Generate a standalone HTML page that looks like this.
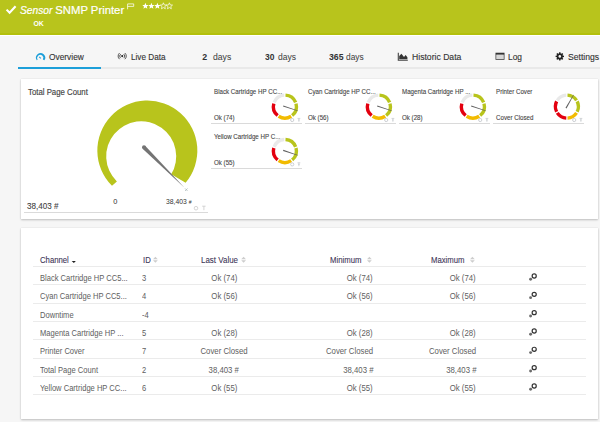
<!DOCTYPE html>
<html><head><meta charset="utf-8">
<style>
*{margin:0;padding:0;box-sizing:border-box}
html,body{width:600px;height:422px;overflow:hidden;background:#f6f6f6;font-family:"Liberation Sans",sans-serif;position:relative}
.a{position:absolute;white-space:nowrap;line-height:1}
.card{position:absolute;background:#fff;box-shadow:0 1px 2px rgba(0,0,0,.22),0 0 1px rgba(0,0,0,.12)}
.rl{position:absolute;left:33px;width:553px;height:1px;background:#ebebeb}
.pl{position:absolute;height:1px;background:#dadada}
</style></head><body>
<div class="a" style="left:0;top:0;width:600px;height:33px;background:#b8c41c"></div>
<div class="a" style="left:0;top:33px;width:600px;height:1.5px;background:#b3c00c"></div>
<div class="a" style="left:0;top:34.5px;width:600px;height:1.5px;background:#fff"></div>
<div class="a" style="left:20.00px;top:4.89px;font-size:11px;color:#fff;font-weight:400;font-style:italic;-webkit-text-stroke:0.2px #fff;"><span style="display:inline-block;transform:scaleX(0.93);transform-origin:left">Sensor</span></div>
<div class="a" style="left:55.30px;top:4.63px;font-size:11.3px;color:#fff;font-weight:400;font-style:normal;-webkit-text-stroke:0.2px #fff;">SNMP Printer</div>
<div class="a" style="left:33.50px;top:20.86px;font-size:6.9px;color:#fff;font-weight:700;font-style:normal;">OK</div>
<div class="a" style="left:48.50px;top:52.55px;font-size:8.8px;color:#333;font-weight:400;font-style:normal;-webkit-text-stroke:0.12px #333;"><span style="display:inline-block;transform:scaleX(0.95);transform-origin:left">Overview</span></div>
<div class="a" style="left:130.50px;top:52.55px;font-size:8.8px;color:#333;font-weight:400;font-style:normal;-webkit-text-stroke:0.12px #333;"><span style="display:inline-block;transform:scaleX(0.93);transform-origin:left">Live Data</span></div>
<div class="a" style="left:202.30px;top:52.55px;font-size:8.8px;color:#333;font-weight:700;font-style:normal;">2</div>
<div class="a" style="left:264.50px;top:52.55px;font-size:8.8px;color:#333;font-weight:700;font-style:normal;"><span style="display:inline-block;transform:scaleX(0.96);transform-origin:left">30</span></div>
<div class="a" style="left:328.50px;top:52.55px;font-size:8.8px;color:#333;font-weight:700;font-style:normal;"><span style="display:inline-block;transform:scaleX(0.99);transform-origin:left">365</span></div>
<div class="a" style="left:212.60px;top:52.55px;font-size:8.8px;color:#444;font-weight:400;font-style:normal;-webkit-text-stroke:0.05px #444;"><span style="display:inline-block;transform:scaleX(0.98);transform-origin:left">days</span></div>
<div class="a" style="left:277.80px;top:52.55px;font-size:8.8px;color:#444;font-weight:400;font-style:normal;-webkit-text-stroke:0.05px #444;"><span style="display:inline-block;transform:scaleX(0.97);transform-origin:left">days</span></div>
<div class="a" style="left:346.00px;top:52.55px;font-size:8.8px;color:#444;font-weight:400;font-style:normal;-webkit-text-stroke:0.05px #444;"><span style="display:inline-block;transform:scaleX(0.95);transform-origin:left">days</span></div>
<div class="a" style="left:411.50px;top:52.55px;font-size:8.8px;color:#333;font-weight:400;font-style:normal;-webkit-text-stroke:0.12px #333;"><span style="display:inline-block;transform:scaleX(0.98);transform-origin:left">Historic Data</span></div>
<div class="a" style="left:508.00px;top:52.55px;font-size:8.8px;color:#333;font-weight:400;font-style:normal;-webkit-text-stroke:0.12px #333;"><span style="display:inline-block;transform:scaleX(0.95);transform-origin:left">Log</span></div>
<div class="a" style="left:567.50px;top:52.55px;font-size:8.8px;color:#333;font-weight:400;font-style:normal;-webkit-text-stroke:0.12px #333;"><span style="display:inline-block;transform:scaleX(0.98);transform-origin:left">Settings</span></div>
<div class="a" style="left:18px;top:67px;width:582px;height:2px;background:#e9e9e9"></div>
<div class="a" style="left:18px;top:67px;width:83px;height:2px;background:#1d9fd9"></div>
<div class="card" style="left:21px;top:79px;width:577px;height:140px"></div>
<div class="card" style="left:21px;top:228px;width:577px;height:191px"></div>
<svg class="a" style="left:0;top:0" width="600" height="422" viewBox="0 0 600 422"><polyline points="6.6,9.6 9.6,12.8 15.6,6.2" fill="none" stroke="#fff" stroke-width="2.1"/><path d="M127.6,9.3V3.9H133.7V6.4H127.6" fill="none" stroke="#fff" stroke-width="0.75"/><polygon points="145.40,2.80 146.27,4.90 148.54,5.08 146.81,6.56 147.34,8.77 145.40,7.58 143.46,8.77 143.99,6.56 142.26,5.08 144.53,4.90" fill="#fff"/><polygon points="151.40,2.80 152.27,4.90 154.54,5.08 152.81,6.56 153.34,8.77 151.40,7.58 149.46,8.77 149.99,6.56 148.26,5.08 150.53,4.90" fill="#fff"/><polygon points="157.40,2.80 158.27,4.90 160.54,5.08 158.81,6.56 159.34,8.77 157.40,7.58 155.46,8.77 155.99,6.56 154.26,5.08 156.53,4.90" fill="#fff"/><polygon points="163.40,2.80 164.27,4.90 166.54,5.08 164.81,6.56 165.34,8.77 163.40,7.58 161.46,8.77 161.99,6.56 160.26,5.08 162.53,4.90" fill="none" stroke="#fff" stroke-width="0.7"/><polygon points="169.40,2.80 170.27,4.90 172.54,5.08 170.81,6.56 171.34,8.77 169.40,7.58 167.46,8.77 167.99,6.56 166.26,5.08 168.53,4.90" fill="none" stroke="#fff" stroke-width="0.7"/><path d="M36.83,60.34A4.6,4.6 0 1 1 44.37,60.34L42.86,59.60A3.1,3.1 0 1 0 37.60,59.69Z" fill="#1d9fd9"/><path d="M39.2,56.8L40.9,58.3" stroke="#1d9fd9" stroke-width="1.1"/><circle cx="122.2" cy="56.1" r="1.05" fill="#222"/><path d="M120.8,54.1A2.4,2.4 0 0 0 120.8,58.1M123.6,54.1A2.4,2.4 0 0 1 123.6,58.1M119.6,53.0A4,4 0 0 0 119.6,59.2M124.8,53.0A4,4 0 0 1 124.8,59.2" fill="none" stroke="#444" stroke-width="0.9"/><path d="M398.3,52.8V60.3H407.8" fill="none" stroke="#444" stroke-width="1.1"/><path d="M399.2,59.2V56L401.4,53.8L404,57L405.6,55L407.4,57.2V59.2Z" fill="#333"/><rect x="495.9" y="53.1" width="8.2" height="6.4" fill="#e6e6e6" stroke="#444" stroke-width="0.8"/><rect x="495.9" y="53" width="8.2" height="1.6" fill="#333"/><path d="M498,55v4M500,55v4M502,55v4" stroke="#aaa" stroke-width="0.5"/><polygon points="559.14,52.20 560.46,52.20 560.71,53.44 561.26,53.66 562.30,52.96 563.24,53.90 562.54,54.94 562.76,55.49 564.00,55.74 564.00,57.06 562.76,57.31 562.54,57.86 563.24,58.90 562.30,59.84 561.26,59.14 560.71,59.36 560.46,60.60 559.14,60.60 558.89,59.36 558.34,59.14 557.30,59.84 556.36,58.90 557.06,57.86 556.84,57.31 555.60,57.06 555.60,55.74 556.84,55.49 557.06,54.94 556.36,53.90 557.30,52.96 558.34,53.66 558.89,53.44" fill="#222"/><circle cx="559.8" cy="56.4" r="1.3" fill="#f6f6f6"/></svg>
<div class="a" style="left:27.70px;top:87.97px;font-size:8.3px;color:#444;font-weight:400;font-style:normal;-webkit-text-stroke:0.15px #444;"><span style="display:inline-block;transform:scaleX(0.94);transform-origin:left">Total Page Count</span></div>
<div class="a" style="left:27.00px;top:201.95px;font-size:8.8px;color:#444;font-weight:400;font-style:normal;-webkit-text-stroke:0.1px #444;"><span style="display:inline-block;transform:scaleX(0.92);transform-origin:left">38,403 #</span></div>
<div class="pl" style="left:24px;top:212px;width:184px"></div>
<div class="a" style="left:113.20px;top:198.24px;font-size:7.4px;color:#333;font-weight:400;font-style:normal;">0</div>
<div class="a" style="left:165.60px;top:198.24px;font-size:7.4px;color:#333;font-weight:400;font-style:normal;"><span style="display:inline-block;transform:scaleX(0.92);transform-origin:left">38,403 <span style="font-size:5.5px">#</span></span></div>
<div class="a" style="left:214.00px;top:88.84px;font-size:6.8px;color:#444;font-weight:400;font-style:normal;-webkit-text-stroke:0.1px #444;"><span style="display:inline-block;transform:scaleX(0.91);transform-origin:left">Black Cartridge HP CC...</span></div>
<div class="a" style="left:214.00px;top:115.04px;font-size:6.8px;color:#444;font-weight:400;font-style:normal;-webkit-text-stroke:0.1px #444;"><span style="display:inline-block;transform:scaleX(0.91);transform-origin:left">Ok (74)</span></div>
<div class="pl" style="left:210.80px;top:122.70px;width:91px"></div>
<div class="a" style="left:308.00px;top:88.84px;font-size:6.8px;color:#444;font-weight:400;font-style:normal;-webkit-text-stroke:0.1px #444;"><span style="display:inline-block;transform:scaleX(0.91);transform-origin:left">Cyan Cartridge HP CC...</span></div>
<div class="a" style="left:308.00px;top:115.04px;font-size:6.8px;color:#444;font-weight:400;font-style:normal;-webkit-text-stroke:0.1px #444;"><span style="display:inline-block;transform:scaleX(0.91);transform-origin:left">Ok (56)</span></div>
<div class="pl" style="left:304.80px;top:122.70px;width:91px"></div>
<div class="a" style="left:402.00px;top:88.84px;font-size:6.8px;color:#444;font-weight:400;font-style:normal;-webkit-text-stroke:0.1px #444;"><span style="display:inline-block;transform:scaleX(0.91);transform-origin:left">Magenta Cartridge HP ...</span></div>
<div class="a" style="left:402.00px;top:115.04px;font-size:6.8px;color:#444;font-weight:400;font-style:normal;-webkit-text-stroke:0.1px #444;"><span style="display:inline-block;transform:scaleX(0.91);transform-origin:left">Ok (28)</span></div>
<div class="pl" style="left:398.80px;top:122.70px;width:91px"></div>
<div class="a" style="left:496.00px;top:88.84px;font-size:6.8px;color:#444;font-weight:400;font-style:normal;-webkit-text-stroke:0.1px #444;"><span style="display:inline-block;transform:scaleX(0.91);transform-origin:left">Printer Cover</span></div>
<div class="a" style="left:496.00px;top:115.04px;font-size:6.8px;color:#444;font-weight:400;font-style:normal;-webkit-text-stroke:0.1px #444;"><span style="display:inline-block;transform:scaleX(0.91);transform-origin:left">Cover Closed</span></div>
<div class="pl" style="left:492.80px;top:122.70px;width:91px"></div>
<div class="a" style="left:214.00px;top:133.84px;font-size:6.8px;color:#444;font-weight:400;font-style:normal;-webkit-text-stroke:0.1px #444;"><span style="display:inline-block;transform:scaleX(0.91);transform-origin:left">Yellow Cartridge HP C...</span></div>
<div class="a" style="left:214.00px;top:160.04px;font-size:6.8px;color:#444;font-weight:400;font-style:normal;-webkit-text-stroke:0.1px #444;"><span style="display:inline-block;transform:scaleX(0.91);transform-origin:left">Ok (55)</span></div>
<div class="pl" style="left:210.80px;top:167.70px;width:91px"></div>
<div class="a" style="left:39.50px;top:255.75px;font-size:8.8px;color:#3c3456;font-weight:400;font-style:normal;-webkit-text-stroke:0.1px #3c3456;"><span style="display:inline-block;transform:scaleX(0.88);transform-origin:left">Channel</span></div>
<div class="a" style="left:142.60px;top:255.75px;font-size:8.8px;color:#3c3456;font-weight:400;font-style:normal;-webkit-text-stroke:0.1px #3c3456;"><span style="display:inline-block;transform:scaleX(0.88);transform-origin:left">ID</span></div>
<div class="a" style="left:201.20px;top:255.75px;font-size:8.8px;color:#3c3456;font-weight:400;font-style:normal;-webkit-text-stroke:0.08px #3c3456;"><span style="display:inline-block;transform:scaleX(0.905);transform-origin:left">Last Value</span></div>
<div class="a" style="left:329.80px;top:255.75px;font-size:8.8px;color:#3c3456;font-weight:400;font-style:normal;-webkit-text-stroke:0.1px #3c3456;"><span style="display:inline-block;transform:scaleX(0.88);transform-origin:left">Minimum</span></div>
<div class="a" style="left:431.00px;top:255.75px;font-size:8.8px;color:#3c3456;font-weight:400;font-style:normal;-webkit-text-stroke:0.1px #3c3456;"><span style="display:inline-block;transform:scaleX(0.88);transform-origin:left">Maximum</span></div>
<div class="rl" style="top:266px"></div>
<div class="a" style="left:39.50px;top:273.92px;font-size:8.6px;color:#5e5e5e;font-weight:400;font-style:normal;"><span style="display:inline-block;transform:scaleX(0.88);transform-origin:left">Black Cartridge HP CC5...</span></div>
<div class="a" style="left:142.40px;top:273.92px;font-size:8.6px;color:#5e5e5e;font-weight:400;font-style:normal;"><span style="display:inline-block;transform:scaleX(0.88);transform-origin:left">3</span></div>
<div class="a" style="left:74.20px;width:300px;text-align:center;top:273.92px;font-size:8.6px;color:#5e5e5e;font-weight:400;font-style:normal;"><span style="display:inline-block;transform:scaleX(0.905);transform-origin:center">Ok (74)</span></div>
<div class="a" style="right:227.00px;top:273.92px;font-size:8.6px;color:#5e5e5e;font-weight:400;font-style:normal;"><span style="display:inline-block;transform:scaleX(0.905);transform-origin:right">Ok (74)</span></div>
<div class="a" style="right:124.00px;top:273.92px;font-size:8.6px;color:#5e5e5e;font-weight:400;font-style:normal;"><span style="display:inline-block;transform:scaleX(0.905);transform-origin:right">Ok (74)</span></div>
<div class="rl" style="top:284.20px"></div>
<div class="a" style="left:39.50px;top:292.25px;font-size:8.6px;color:#5e5e5e;font-weight:400;font-style:normal;"><span style="display:inline-block;transform:scaleX(0.88);transform-origin:left">Cyan Cartridge HP CC5...</span></div>
<div class="a" style="left:142.40px;top:292.25px;font-size:8.6px;color:#5e5e5e;font-weight:400;font-style:normal;"><span style="display:inline-block;transform:scaleX(0.88);transform-origin:left">4</span></div>
<div class="a" style="left:74.20px;width:300px;text-align:center;top:292.25px;font-size:8.6px;color:#5e5e5e;font-weight:400;font-style:normal;"><span style="display:inline-block;transform:scaleX(0.905);transform-origin:center">Ok (56)</span></div>
<div class="a" style="right:227.00px;top:292.25px;font-size:8.6px;color:#5e5e5e;font-weight:400;font-style:normal;"><span style="display:inline-block;transform:scaleX(0.905);transform-origin:right">Ok (56)</span></div>
<div class="a" style="right:124.00px;top:292.25px;font-size:8.6px;color:#5e5e5e;font-weight:400;font-style:normal;"><span style="display:inline-block;transform:scaleX(0.905);transform-origin:right">Ok (56)</span></div>
<div class="rl" style="top:302.53px"></div>
<div class="a" style="left:39.50px;top:310.58px;font-size:8.6px;color:#5e5e5e;font-weight:400;font-style:normal;"><span style="display:inline-block;transform:scaleX(0.88);transform-origin:left">Downtime</span></div>
<div class="a" style="left:142.40px;top:310.58px;font-size:8.6px;color:#5e5e5e;font-weight:400;font-style:normal;"><span style="display:inline-block;transform:scaleX(0.88);transform-origin:left">-4</span></div>
<div class="rl" style="top:320.86px"></div>
<div class="a" style="left:39.50px;top:328.91px;font-size:8.6px;color:#5e5e5e;font-weight:400;font-style:normal;"><span style="display:inline-block;transform:scaleX(0.88);transform-origin:left">Magenta Cartridge HP ...</span></div>
<div class="a" style="left:142.40px;top:328.91px;font-size:8.6px;color:#5e5e5e;font-weight:400;font-style:normal;"><span style="display:inline-block;transform:scaleX(0.88);transform-origin:left">5</span></div>
<div class="a" style="left:74.20px;width:300px;text-align:center;top:328.91px;font-size:8.6px;color:#5e5e5e;font-weight:400;font-style:normal;"><span style="display:inline-block;transform:scaleX(0.905);transform-origin:center">Ok (28)</span></div>
<div class="a" style="right:227.00px;top:328.91px;font-size:8.6px;color:#5e5e5e;font-weight:400;font-style:normal;"><span style="display:inline-block;transform:scaleX(0.905);transform-origin:right">Ok (28)</span></div>
<div class="a" style="right:124.00px;top:328.91px;font-size:8.6px;color:#5e5e5e;font-weight:400;font-style:normal;"><span style="display:inline-block;transform:scaleX(0.905);transform-origin:right">Ok (28)</span></div>
<div class="rl" style="top:339.19px"></div>
<div class="a" style="left:39.50px;top:347.24px;font-size:8.6px;color:#5e5e5e;font-weight:400;font-style:normal;"><span style="display:inline-block;transform:scaleX(0.88);transform-origin:left">Printer Cover</span></div>
<div class="a" style="left:142.40px;top:347.24px;font-size:8.6px;color:#5e5e5e;font-weight:400;font-style:normal;"><span style="display:inline-block;transform:scaleX(0.88);transform-origin:left">7</span></div>
<div class="a" style="left:74.20px;width:300px;text-align:center;top:347.24px;font-size:8.6px;color:#5e5e5e;font-weight:400;font-style:normal;"><span style="display:inline-block;transform:scaleX(0.905);transform-origin:center">Cover Closed</span></div>
<div class="a" style="right:227.00px;top:347.24px;font-size:8.6px;color:#5e5e5e;font-weight:400;font-style:normal;"><span style="display:inline-block;transform:scaleX(0.905);transform-origin:right">Cover Closed</span></div>
<div class="a" style="right:124.00px;top:347.24px;font-size:8.6px;color:#5e5e5e;font-weight:400;font-style:normal;"><span style="display:inline-block;transform:scaleX(0.905);transform-origin:right">Cover Closed</span></div>
<div class="rl" style="top:357.52px"></div>
<div class="a" style="left:39.50px;top:365.57px;font-size:8.6px;color:#5e5e5e;font-weight:400;font-style:normal;"><span style="display:inline-block;transform:scaleX(0.88);transform-origin:left">Total Page Count</span></div>
<div class="a" style="left:142.40px;top:365.57px;font-size:8.6px;color:#5e5e5e;font-weight:400;font-style:normal;"><span style="display:inline-block;transform:scaleX(0.88);transform-origin:left">2</span></div>
<div class="a" style="left:74.20px;width:300px;text-align:center;top:365.57px;font-size:8.6px;color:#5e5e5e;font-weight:400;font-style:normal;"><span style="display:inline-block;transform:scaleX(0.905);transform-origin:center">38,403 #</span></div>
<div class="a" style="right:227.00px;top:365.57px;font-size:8.6px;color:#5e5e5e;font-weight:400;font-style:normal;"><span style="display:inline-block;transform:scaleX(0.905);transform-origin:right">38,403 #</span></div>
<div class="a" style="right:124.00px;top:365.57px;font-size:8.6px;color:#5e5e5e;font-weight:400;font-style:normal;"><span style="display:inline-block;transform:scaleX(0.905);transform-origin:right">38,403 #</span></div>
<div class="rl" style="top:375.85px"></div>
<div class="a" style="left:39.50px;top:383.90px;font-size:8.6px;color:#5e5e5e;font-weight:400;font-style:normal;"><span style="display:inline-block;transform:scaleX(0.88);transform-origin:left">Yellow Cartridge HP CC...</span></div>
<div class="a" style="left:142.40px;top:383.90px;font-size:8.6px;color:#5e5e5e;font-weight:400;font-style:normal;"><span style="display:inline-block;transform:scaleX(0.88);transform-origin:left">6</span></div>
<div class="a" style="left:74.20px;width:300px;text-align:center;top:383.90px;font-size:8.6px;color:#5e5e5e;font-weight:400;font-style:normal;"><span style="display:inline-block;transform:scaleX(0.905);transform-origin:center">Ok (55)</span></div>
<div class="a" style="right:227.00px;top:383.90px;font-size:8.6px;color:#5e5e5e;font-weight:400;font-style:normal;"><span style="display:inline-block;transform:scaleX(0.905);transform-origin:right">Ok (55)</span></div>
<div class="a" style="right:124.00px;top:383.90px;font-size:8.6px;color:#5e5e5e;font-weight:400;font-style:normal;"><span style="display:inline-block;transform:scaleX(0.905);transform-origin:right">Ok (55)</span></div>
<div class="rl" style="top:394.18px"></div>
<svg class="a" style="left:0;top:0" width="600" height="422" viewBox="0 0 600 422"><path d="M111.99,185.86A50,50 0 1 1 185.65,182.64L171.20,174.33A35,35 0 1 0 116.89,181.48Z" fill="#b8c41c"/><polygon points="142.59,148.71 145.41,145.89 184.5,187.8" fill="#747474"/><circle cx="144" cy="147.3" r="2.0" fill="#747474"/><path d="M185,188.4l2.6,2.6M187.6,188.4l-2.6,2.6" stroke="#9aa" stroke-width="0.6"/><circle cx="196" cy="208.2" r="1.8" fill="none" stroke="#cfcfcf" stroke-width="0.9"/><path d="M202.2,206.2h3.4M203.9,206.2v4" stroke="#cfcfcf" stroke-width="0.9" fill="none"/><path d="M274.16,102.48A11.5,11.5 0 0 1 284.30,95.12" stroke="#e9e9e9" stroke-width="3.4" fill="none"/><path d="M285.50,95.12A11.5,11.5 0 0 1 295.64,102.48" stroke="#b8c41c" stroke-width="3.4" fill="none"/><path d="M296.01,103.62A11.5,11.5 0 0 1 292.14,115.54" stroke="#b8c41c" stroke-width="3.4" fill="none"/><path d="M291.16,116.24A11.5,11.5 0 0 1 278.64,116.24" stroke="#f2bb00" stroke-width="3.4" fill="none"/><path d="M277.66,115.54A11.5,11.5 0 0 1 273.79,103.62" stroke="#e3000f" stroke-width="3.4" fill="none"/><polygon points="283.00,106.61 283.37,105.47 297.72,110.50 297.57,110.98" fill="#606060"/><circle cx="292.20" cy="120.00" r="1.6" fill="none" stroke="#c4c8cc" stroke-width="0.85"/><path d="M297.50,118.40h2.8M298.10,120.00h1.6M298.90,118.40v3.4" stroke="#c4c8cc" stroke-width="0.75" fill="none"/><path d="M368.16,102.48A11.5,11.5 0 0 1 378.30,95.12" stroke="#e9e9e9" stroke-width="3.4" fill="none"/><path d="M379.50,95.12A11.5,11.5 0 0 1 389.64,102.48" stroke="#b8c41c" stroke-width="3.4" fill="none"/><path d="M390.01,103.62A11.5,11.5 0 0 1 386.14,115.54" stroke="#b8c41c" stroke-width="3.4" fill="none"/><path d="M385.16,116.24A11.5,11.5 0 0 1 372.64,116.24" stroke="#f2bb00" stroke-width="3.4" fill="none"/><path d="M371.66,115.54A11.5,11.5 0 0 1 367.79,103.62" stroke="#e3000f" stroke-width="3.4" fill="none"/><polygon points="377.00,106.61 377.37,105.47 391.72,110.50 391.57,110.98" fill="#606060"/><circle cx="386.20" cy="120.00" r="1.6" fill="none" stroke="#c4c8cc" stroke-width="0.85"/><path d="M391.50,118.40h2.8M392.10,120.00h1.6M392.90,118.40v3.4" stroke="#c4c8cc" stroke-width="0.75" fill="none"/><path d="M462.16,102.48A11.5,11.5 0 0 1 472.30,95.12" stroke="#e9e9e9" stroke-width="3.4" fill="none"/><path d="M473.50,95.12A11.5,11.5 0 0 1 483.64,102.48" stroke="#b8c41c" stroke-width="3.4" fill="none"/><path d="M484.01,103.62A11.5,11.5 0 0 1 480.14,115.54" stroke="#b8c41c" stroke-width="3.4" fill="none"/><path d="M479.16,116.24A11.5,11.5 0 0 1 466.64,116.24" stroke="#f2bb00" stroke-width="3.4" fill="none"/><path d="M465.66,115.54A11.5,11.5 0 0 1 461.79,103.62" stroke="#e3000f" stroke-width="3.4" fill="none"/><polygon points="471.00,106.61 471.37,105.47 485.72,110.50 485.57,110.98" fill="#606060"/><circle cx="480.20" cy="120.00" r="1.6" fill="none" stroke="#c4c8cc" stroke-width="0.85"/><path d="M485.50,118.40h2.8M486.10,120.00h1.6M486.90,118.40v3.4" stroke="#c4c8cc" stroke-width="0.75" fill="none"/><path d="M557.26,100.34A11.5,11.5 0 0 1 566.30,95.12" stroke="#e9e9e9" stroke-width="3.4" fill="none"/><path d="M567.50,95.12A11.5,11.5 0 0 1 576.54,100.34" stroke="#b8c41c" stroke-width="3.4" fill="none"/><path d="M577.15,101.38A11.5,11.5 0 0 1 577.15,111.82" stroke="#b8c41c" stroke-width="3.4" fill="none"/><path d="M576.54,112.86A11.5,11.5 0 0 1 567.50,118.08" stroke="#f2bb00" stroke-width="3.4" fill="none"/><path d="M566.30,118.08A11.5,11.5 0 0 1 557.26,112.86" stroke="#e3000f" stroke-width="3.4" fill="none"/><path d="M556.65,111.82A11.5,11.5 0 0 1 556.65,101.38" stroke="#e3000f" stroke-width="3.4" fill="none"/><polygon points="566.52,108.46 565.48,107.86 573.38,94.87 573.82,95.12" fill="#606060"/><circle cx="574.20" cy="120.00" r="1.6" fill="none" stroke="#c4c8cc" stroke-width="0.85"/><path d="M579.50,118.40h2.8M580.10,120.00h1.6M580.90,118.40v3.4" stroke="#c4c8cc" stroke-width="0.75" fill="none"/><path d="M274.16,146.88A11.5,11.5 0 0 1 284.30,139.52" stroke="#e9e9e9" stroke-width="3.4" fill="none"/><path d="M285.50,139.52A11.5,11.5 0 0 1 295.64,146.88" stroke="#b8c41c" stroke-width="3.4" fill="none"/><path d="M296.01,148.02A11.5,11.5 0 0 1 292.14,159.94" stroke="#b8c41c" stroke-width="3.4" fill="none"/><path d="M291.16,160.64A11.5,11.5 0 0 1 278.64,160.64" stroke="#f2bb00" stroke-width="3.4" fill="none"/><path d="M277.66,159.94A11.5,11.5 0 0 1 273.79,148.02" stroke="#e3000f" stroke-width="3.4" fill="none"/><polygon points="283.00,151.01 283.37,149.87 297.72,154.90 297.57,155.38" fill="#606060"/><circle cx="292.20" cy="164.40" r="1.6" fill="none" stroke="#c4c8cc" stroke-width="0.85"/><path d="M297.50,162.80h2.8M298.10,164.40h1.6M298.90,162.80v3.4" stroke="#c4c8cc" stroke-width="0.75" fill="none"/><path d="M153,259.2l2.4,-2.5l2.4,2.5zM153,260.3l2.4,2.5l2.4,-2.5z" fill="#cdcdcd"/><path d="M241.2,259.2l2.4,-2.5l2.4,2.5zM241.2,260.3l2.4,2.5l2.4,-2.5z" fill="#cdcdcd"/><path d="M367,259.2l2.4,-2.5l2.4,2.5zM367,260.3l2.4,2.5l2.4,-2.5z" fill="#cdcdcd"/><path d="M470,259.2l2.4,-2.5l2.4,2.5zM470,260.3l2.4,2.5l2.4,-2.5z" fill="#cdcdcd"/><path d="M71.7,261l2.1,2.1l2.1,-2.1z" fill="#222"/><circle cx="534.2" cy="276.00" r="2.05" fill="none" stroke="#333" stroke-width="1.2"/><circle cx="530.6" cy="279.30" r="1.45" fill="#6a6a6a"/><circle cx="534.2" cy="294.33" r="2.05" fill="none" stroke="#333" stroke-width="1.2"/><circle cx="530.6" cy="297.63" r="1.45" fill="#6a6a6a"/><circle cx="534.2" cy="312.66" r="2.05" fill="none" stroke="#333" stroke-width="1.2"/><circle cx="530.6" cy="315.96" r="1.45" fill="#6a6a6a"/><circle cx="534.2" cy="330.99" r="2.05" fill="none" stroke="#333" stroke-width="1.2"/><circle cx="530.6" cy="334.29" r="1.45" fill="#6a6a6a"/><circle cx="534.2" cy="349.32" r="2.05" fill="none" stroke="#333" stroke-width="1.2"/><circle cx="530.6" cy="352.62" r="1.45" fill="#6a6a6a"/><circle cx="534.2" cy="367.65" r="2.05" fill="none" stroke="#333" stroke-width="1.2"/><circle cx="530.6" cy="370.95" r="1.45" fill="#6a6a6a"/><circle cx="534.2" cy="385.98" r="2.05" fill="none" stroke="#333" stroke-width="1.2"/><circle cx="530.6" cy="389.28" r="1.45" fill="#6a6a6a"/></svg>
</body></html>
